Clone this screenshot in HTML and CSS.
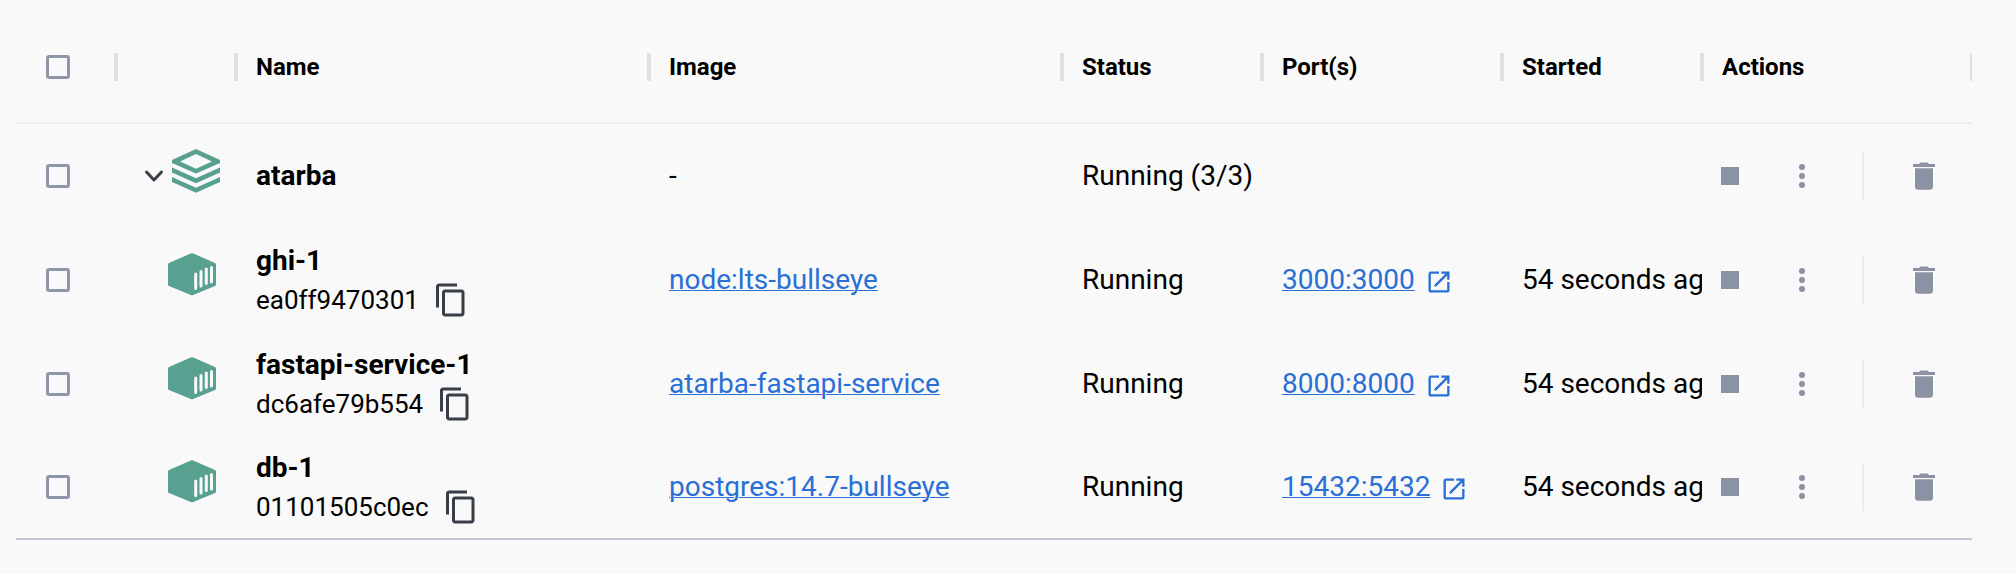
FILE: index.html
```
<!DOCTYPE html>
<html lang="en">
<head>
<meta charset="utf-8">
<title>Containers</title>
<link rel="stylesheet" href="styles.css">
</head>
<body>
<svg class="sprite" aria-hidden="true">
  <symbol id="stack" viewBox="0 0 48 44">
    <path fill-rule="evenodd" d="M24 0 48 11v3L24 24.500 0 14v-3zM24 5 8 12.500l16 7.200 16-7.200z"/>
    <path d="M0 18.500v5l24 10.700 24-10.700v-5L24 29.200zM0 28v5l24 10.700L48 33v-5L24 38.700z"/>
  </symbol>
  <symbol id="container" viewBox="0 0 48 44">
    <path d="M22.800.4Q24-.1 25.200.4L47 10q1 .5 1 1.500v20q0 1-1 1.500L25.200 42q-1.200.5-2.400 0L1 33q-1-.5-1-1.500v-20Q0 10.500 1 10z"/>
    <path class="slats" d="M27.700 21v14.500M33 18.500v14.500M38.300 16v14.500M43.500 14.500V29"/>
  </symbol>
  <symbol id="chevron" viewBox="0 0 32 32">
    <path class="stroke" d="m6.500 12 7.500 8 7.500-8"/>
  </symbol>
  <symbol id="copy" viewBox="0 0 24 24">
    <path d="M16 1H4c-1.100 0-2 .9-2 2v14h2V3h12V1zm3 4H8c-1.100 0-2 .9-2 2v14c0 1.100.9 2 2 2h11c1.100 0 2-.9 2-2V7c0-1.100-.9-2-2-2zm0 16H8V7h11v14z"/>
  </symbol>
  <symbol id="open" viewBox="0 0 24 24">
    <path d="M19 19H5V5h7V3H5c-1.110 0-2 .9-2 2v14c0 1.100.89 2 2 2h14c1.100 0 2-.9 2-2v-7h-2v7zM14 3v2h3.590l-9.830 9.830 1.410 1.410L19 6.410V10h2V3h-7z"/>
  </symbol>
  <symbol id="stop" viewBox="0 0 18 18"><path d="M0 0h18v18H0z"/></symbol>
  <symbol id="more" viewBox="0 0 6 24">
    <circle cx="3" cy="3" r="3"/><circle cx="3" cy="12" r="3"/><circle cx="3" cy="21" r="3"/>
  </symbol>
  <symbol id="trash" viewBox="0 0 22 28">
    <path d="M0 2h6l1.500-1.500h7L16 2h6v3H0zM2 6.300h18v18.200q0 3.200-3.200 3.200H5.200Q2 27.700 2 24.500z"/>
  </symbol>
</svg>

<main class="panel">
  <table class="grid">
    <colgroup>
      <col class="col-check"><col class="col-icon"><col><col>
      <col class="col-status"><col class="col-ports"><col class="col-started"><col class="col-actions">
    </colgroup>
    <thead>
      <tr>
        <th class="check"><input type="checkbox" aria-label="Select all"></th>
        <th></th>
        <th>Name</th>
        <th>Image</th>
        <th>Status</th>
        <th>Port(s)</th>
        <th>Started</th>
        <th>Actions</th>
      </tr>
    </thead>
    <tbody>
      <tr>
        <td class="check"><input type="checkbox" aria-label="Select atarba"></td>
        <td class="kind"><div class="kind-group">
          <button class="toggle" aria-label="Collapse atarba" aria-expanded="true"><svg class="i-chevron"><use href="#chevron"/></svg></button>
          <svg class="i-kind"><use href="#stack"/></svg>
        </div></td>
        <td><div class="name">atarba</div></td>
        <td>-</td>
        <td>Running (3/3)</td>
        <td></td>
        <td></td>
        <td class="actions"><div class="action-bar">
          <button aria-label="Stop"><svg class="i-stop"><use href="#stop"/></svg></button>
          <button class="more" aria-label="More actions"><svg class="i-more"><use href="#more"/></svg></button>
          <span class="divider"></span>
          <button aria-label="Delete"><svg class="i-trash"><use href="#trash"/></svg></button>
        </div></td>
      </tr>
      <tr>
        <td class="check"><input type="checkbox" aria-label="Select ghi-1"></td>
        <td class="kind"><div class="kind-group child"><svg class="i-kind"><use href="#container"/></svg></div></td>
        <td><div class="name">ghi-1</div><div class="ident">ea0ff9470301<button aria-label="Copy ID"><svg class="i-copy"><use href="#copy"/></svg></button></div></td>
        <td><a href="#">node:lts-bullseye</a></td>
        <td>Running</td>
        <td><div class="port"><a href="#">3000:3000</a><svg class="i-open"><use href="#open"/></svg></div></td>
        <td>54 seconds ago</td>
        <td class="actions"><div class="action-bar">
          <button aria-label="Stop"><svg class="i-stop"><use href="#stop"/></svg></button>
          <button class="more" aria-label="More actions"><svg class="i-more"><use href="#more"/></svg></button>
          <span class="divider"></span>
          <button aria-label="Delete"><svg class="i-trash"><use href="#trash"/></svg></button>
        </div></td>
      </tr>
      <tr>
        <td class="check"><input type="checkbox" aria-label="Select fastapi-service-1"></td>
        <td class="kind"><div class="kind-group child"><svg class="i-kind"><use href="#container"/></svg></div></td>
        <td><div class="name">fastapi-service-1</div><div class="ident">dc6afe79b554<button aria-label="Copy ID"><svg class="i-copy"><use href="#copy"/></svg></button></div></td>
        <td><a href="#">atarba-fastapi-service</a></td>
        <td>Running</td>
        <td><div class="port"><a href="#">8000:8000</a><svg class="i-open"><use href="#open"/></svg></div></td>
        <td>54 seconds ago</td>
        <td class="actions"><div class="action-bar">
          <button aria-label="Stop"><svg class="i-stop"><use href="#stop"/></svg></button>
          <button class="more" aria-label="More actions"><svg class="i-more"><use href="#more"/></svg></button>
          <span class="divider"></span>
          <button aria-label="Delete"><svg class="i-trash"><use href="#trash"/></svg></button>
        </div></td>
      </tr>
      <tr>
        <td class="check"><input type="checkbox" aria-label="Select db-1"></td>
        <td class="kind"><div class="kind-group child"><svg class="i-kind"><use href="#container"/></svg></div></td>
        <td><div class="name">db-1</div><div class="ident">01101505c0ec<button aria-label="Copy ID"><svg class="i-copy"><use href="#copy"/></svg></button></div></td>
        <td><a href="#">postgres:14.7-bullseye</a></td>
        <td>Running</td>
        <td><div class="port"><a href="#">15432:5432</a><svg class="i-open"><use href="#open"/></svg></div></td>
        <td>54 seconds ago</td>
        <td class="actions"><div class="action-bar">
          <button aria-label="Stop"><svg class="i-stop"><use href="#stop"/></svg></button>
          <button class="more" aria-label="More actions"><svg class="i-more"><use href="#more"/></svg></button>
          <span class="divider"></span>
          <button aria-label="Delete"><svg class="i-trash"><use href="#trash"/></svg></button>
        </div></td>
      </tr>
    </tbody>
  </table>
</main>
</body>
</html>
```
FILE: styles.css
```
* { box-sizing: border-box; }

body {
  margin: 0;
  background: #f9f9f9;
  color: #000;
  font-family: Roboto, "Liberation Sans", sans-serif;
  font-size: 28px;
  line-height: 38px;
}

.sprite { display: none; }
svg { display: block; flex: none; fill: currentColor; }

.panel {
  margin: 12px 44px 0 16px;
  overflow: hidden;
}

.grid {
  width: 100%;
  table-layout: fixed;
  border-collapse: separate;
  border-spacing: 0;
}

.col-check { width: 100px; }
.col-icon { width: 120px; }
.col-status, .col-started { width: 200px; }
.col-ports { width: 240px; }
.col-actions { width: 270px; }

th, td {
  padding: 0 0 0 20px;
  text-align: left;
  vertical-align: middle;
  white-space: nowrap;
}

th {
  position: relative;
  height: 112px;
  border-bottom: 2px solid #eee;
  font-size: 24px;
  font-weight: 700;
}

/* column resize handle, straddling the column edge */
th::after {
  content: "";
  position: absolute;
  z-index: 1;
  top: 41px;
  right: -2px;
  width: 4px;
  height: 28px;
  background: #e0e0e0;
}

td { height: 104px; overflow: hidden; }
tbody tr:last-child td { border-bottom: 2px solid #c4c8d6; }

.check { padding-left: 30px; }
.check input {
  display: block;
  appearance: none;
  width: 24px;
  height: 24px;
  margin: 0;
  border: 3px solid #8f96a8;
  border-radius: 3px;
}

button {
  display: flex;
  align-items: center;
  justify-content: center;
  padding: 0;
  border: 0;
  background: none;
  color: inherit;
}

.kind { padding-left: 24px; }
.kind-group { display: flex; align-items: center; }
.child { padding-left: 28px; }
.toggle { color: #393f49; }
.i-chevron { width: 32px; height: 32px; }
.stroke {
  fill: none;
  stroke: currentColor;
  stroke-width: 3;
  stroke-linecap: round;
  stroke-linejoin: round;
}
.i-kind {
  width: 48px;
  height: 44px;
  margin-bottom: 10px;
  color: #58a08f;
}
.slats {
  fill: none;
  stroke: #f9f9f9;
  stroke-width: 3;
  stroke-linecap: round;
}

.name { font-weight: 700; }
.ident {
  display: flex;
  align-items: center;
  gap: 14px;
  margin-top: 2px;
  font-size: 26px;
  line-height: 36px;
}
.ident button { color: #393f49; }
.i-copy { width: 36px; height: 36px; }

a { color: #2a6fd6; text-underline-offset: 1px; text-decoration-thickness: 1px; }
.port { display: flex; align-items: center; gap: 10px; color: #2a6fd6; }
.i-open { width: 28px; height: 28px; margin-top: 4px; }

.actions { padding-left: 0; }
.action-bar { display: flex; align-items: center; color: #8b92a3; }
.action-bar button { width: 56px; height: 56px; }
.action-bar .more { margin-left: 16px; }
.i-stop { width: 18px; height: 18px; }
.i-more { width: 6px; height: 24px; }
.i-trash { width: 22px; height: 28px; }
.divider {
  width: 2px;
  height: 48px;
  margin: 0 32px;
  background: #ebebeb;
}
```
